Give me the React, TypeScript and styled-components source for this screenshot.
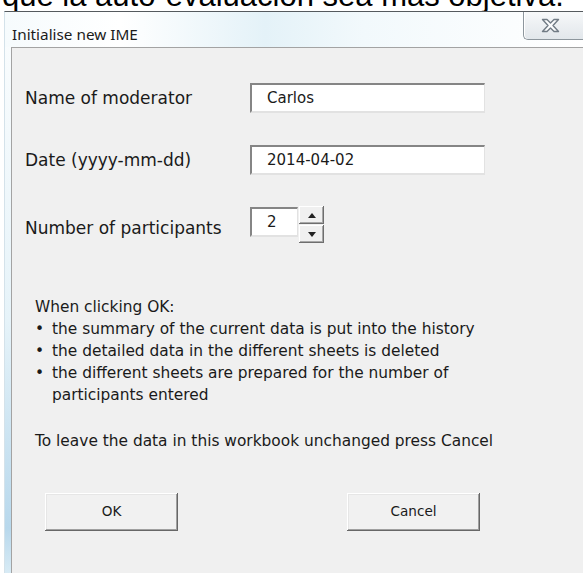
import styled, { createGlobalStyle } from "styled-components";

const GlobalStyle = createGlobalStyle`
  html, body {
    margin: 0;
    padding: 0;
    background: #fff;
    overflow: hidden;
  }
`;

const Page = styled.div`
  width: 583px;
  height: 573px;
  overflow: hidden;
  display: flex;
  flex-direction: column;
  background: #fff;
`;

const Caption = styled.p`
  margin: -22px 0 -2px 2px;
  height: 35px;
  flex: none;
  font-family: "Liberation Sans", Arial, sans-serif;
  font-size: 31px;
  line-height: 35px;
  color: #000;
  white-space: nowrap;
`;

const Window = styled.div`
  flex: 1;
  display: flex;
  flex-direction: column;
  margin-left: 4px;
  border-top: 1px solid #555a5e;
  border-left: 1px solid #d4e2ea;
  padding-left: 6px;
  background: linear-gradient(180deg, #fbfdfe 0%, #e6f3f9 55%, #b8d8ec 92%, #d8ebf5 100%);
`;

const TitleBar = styled.div`
  height: 35px;
  display: flex;
  align-items: flex-start;
  margin-left: -6px;
  background: linear-gradient(90deg, #f6fbfd 0%, #ffffff 20%, #e4f2f8 45%, #f2f9fc 62%, #ffffff 100%);
`;

const Title = styled.span`
  margin: 12px 0 0 7px;
  font-family: "Noto Sans", "Open Sans", sans-serif;
  font-size: 15.3px;
  line-height: 20px;
  color: #1b1b1b;
`;

const CloseButton = styled.div`
  margin-left: auto;
  width: 60px;
  height: 28px;
  display: flex;
  align-items: center;
  justify-content: center;
  padding-right: 6px;
  box-sizing: border-box;
  border-left: 1px solid #8d969d;
  border-bottom: 1px solid #8d969d;
  border-bottom-left-radius: 5px;
  background: linear-gradient(180deg, #f7f9fa 0%, #eceff2 50%, #e2e7eb 100%);
  box-shadow: inset 1px 0 0 #fff;
`;

const Client = styled.div`
  flex: 1;
  border-top: 1px solid #a3a3a3;
  border-left: 1px solid #a3a3a3;
  background: #f0f0f0;
  padding: 35px 0 0 13px;
  font-family: "DejaVu Sans", Verdana, sans-serif;
  color: #1a1a1a;
`;

const Form = styled.div`
  display: grid;
  grid-template-columns: 225px auto;
  grid-auto-rows: 30px;
  row-gap: 32px;
  align-items: center;
`;

const Label = styled.label<{ $drop?: number }>`
  font-size: 17px;
  line-height: 20px;
  padding-top: ${(p) => p.$drop ?? 0}px;
`;

const Field = styled.div<{ $width: number }>`
  width: ${(p) => p.$width}px;
  height: 30px;
  box-sizing: border-box;
  background: #fff;
  border-style: solid;
  border-width: 2px 1px 2px 2px;
  border-color: #858585 #e2e2e2 #e2e2e2 #858585;
  padding-left: 15px;
  font-size: 15px;
  line-height: 25px;
  display: flex;
  align-items: center;
`;

const SpinRow = styled.div`
  display: flex;
  align-items: flex-start;
  align-self: start;
  gap: 1px;
`;

const Spin = styled.div`
  display: flex;
  flex-direction: column;
  margin-top: -1px;
`;

const SpinHalf = styled.div`
  width: 25px;
  height: 18px;
  box-sizing: border-box;
  display: flex;
  align-items: center;
  justify-content: center;
  background: #f0f0f0;
  box-shadow: inset -1px -1px 0 #6e6e6e, inset 1px 1px 0 #fff, inset -2px -2px 0 #a8a8a8;
  & + & {
    margin-top: 1px;
  }
`;

const Notes = styled.div`
  margin: 59px 0 0 10px;
  font-size: 15.4px;
  line-height: 22px;
`;

const Bullets = styled.ul`
  list-style: none;
  margin: 0;
  padding: 0;
`;

const Bullet = styled.li`
  display: flex;
  width: 470px;
  &::before {
    content: "•";
    flex: none;
    width: 17px;
  }
`;

const Spacer = styled.div`
  height: 24px;
`;

const Buttons = styled.div`
  display: flex;
  gap: 169px;
  margin: 41px 0 0 20px;
`;

const Button = styled.button`
  width: 133px;
  height: 38px;
  border: none;
  background: #f1f1f1;
  box-shadow: inset -1px -1px 0 #676767, inset 1px 1px 0 #fff, inset -2px -2px 0 #a0a0a0,
    inset 2px 2px 0 #e6e6e6;
  font-family: "DejaVu Sans", Verdana, sans-serif;
  font-size: 13.6px;
  color: #1a1a1a;
  padding: 0 0 2px;
`;

const Arrow = ({ up }: { up?: boolean }) => (
  <svg width="8" height="5" viewBox="0 0 8 5">
    <path d={up ? "M0 5 L4 0 L8 5 Z" : "M0 0 L8 0 L4 5 Z"} fill="#222" />
  </svg>
);

const CloseGlyph = () => (
  <svg width="19" height="15" viewBox="0 0 19 15">
    <path
      d="M1.5 1.5 H6 L9.5 5 L13 1.5 H17.5 L12 7.5 L17.5 13.5 H13 L9.5 10 L6 13.5 H1.5 L7 7.5 Z"
      fill="#fbfcfd"
      stroke="#717b85"
      strokeWidth="1.4"
      strokeLinejoin="round"
    />
  </svg>
);

const App = () => {
  return (
    <Page>
      <GlobalStyle />
      <Caption>que la auto-evaluación sea más objetiva.</Caption>
      <Window>
        <TitleBar>
          <Title>Initialise new IME</Title>
          <CloseButton>
            <CloseGlyph />
          </CloseButton>
        </TitleBar>
        <Client>
          <Form>
            <Label>Name of moderator</Label>
            <Field $width={235}>Carlos</Field>
            <Label>Date (yyyy-mm-dd)</Label>
            <Field $width={235}>2014-04-02</Field>
            <Label $drop={12}>Number of participants</Label>
            <SpinRow>
              <Field $width={48}>2</Field>
              <Spin>
                <SpinHalf>
                  <Arrow up />
                </SpinHalf>
                <SpinHalf>
                  <Arrow />
                </SpinHalf>
              </Spin>
            </SpinRow>
          </Form>
          <Notes>
            <div>When clicking OK:</div>
            <Bullets>
              <Bullet>the summary of the current data is put into the history</Bullet>
              <Bullet>the detailed data in the different sheets is deleted</Bullet>
              <Bullet>the different sheets are prepared for the number of participants entered</Bullet>
            </Bullets>
            <Spacer />
            <div>To leave the data in this workbook unchanged press Cancel</div>
          </Notes>
          <Buttons>
            <Button>OK</Button>
            <Button>Cancel</Button>
          </Buttons>
        </Client>
      </Window>
    </Page>
  );
};

export default App;
